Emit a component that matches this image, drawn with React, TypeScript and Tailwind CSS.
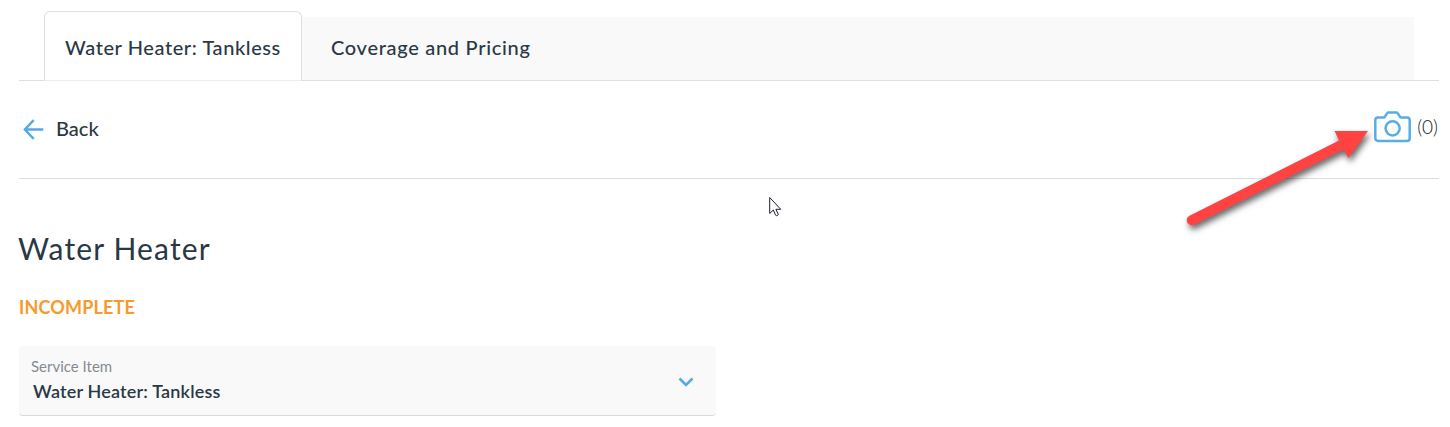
export default function App() {
  return (
    <main className="relative h-[427px] w-[1450px] overflow-hidden bg-white pt-[11px] pl-[19px] pr-[11px] font-['Lato',sans-serif] text-[#2a3846]">
      <nav className="flex h-[70px] items-end border-b border-[#dedfe0] pl-[25px] pr-[25px] text-[20px] font-medium">
        <button className="flex h-[70px] w-[258px] shrink-0 -mb-px items-center rounded-t-[6px] border border-b-[#eeeeee] border-[#dedfe0] bg-white pl-[20px] pt-[1px]">
          <span className="whitespace-nowrap tracking-[0.58px]">Water Heater: Tankless</span>
        </button>
        <button className="flex h-[63px] flex-1 items-center bg-[#f9f9f9] pb-[4px] pl-[29px]">
          <span className="whitespace-nowrap tracking-[0.7px]">Coverage and Pricing</span>
        </button>
      </nav>

      <header className="flex h-[98px] items-center justify-between border-b border-[#dcdddf]">
        <button className="flex items-center gap-[12px] pl-[4px]">
          <svg className="h-[21px] w-[21px]" viewBox="0 0 21 21" fill="none" stroke="#54a9e2" strokeWidth="2.4">
            <path d="M20.3 10.5H2M10.7 1.2 1.8 10.5l8.9 9.3" />
          </svg>
          <span className="pb-[3px] text-[20px] font-medium">Back</span>
        </button>
        <button className="flex items-center gap-[6px] pb-[5px] pr-px">
          <svg className="h-[32px] w-[38px]" viewBox="0 0 38 32" fill="none" stroke="#58ade4" strokeWidth="2.5" strokeLinejoin="round">
            <path d="M5 6.6h6.2l3-4.4c.3-.5.7-.7 1.3-.7h7.8c.6 0 1 .2 1.3.7l3 4.4H34a2.7 2.7 0 0 1 2.7 2.7v18a2.7 2.7 0 0 1-2.7 2.7H5a2.7 2.7 0 0 1-2.7-2.7v-18A2.7 2.7 0 0 1 5 6.600Z" />
            <circle cx="19.6" cy="17.3" r="7.1" />
          </svg>
          <span className="text-[19px] font-light text-[#101c28]">(0)</span>
        </button>
      </header>

      <section>
        <h1 className="mt-[49px] h-[40px] whitespace-nowrap text-[30px] leading-[40px] tracking-[1.15px] -ml-px">Water Heater</h1>
        <p className="mt-[27px] h-[24px] whitespace-nowrap text-[18px] font-bold leading-[24px] tracking-[0.15px] text-[#f79a2b]">INCOMPLETE</p>
        <button className="mt-[27px] flex h-[70px] w-[697px] items-center justify-between rounded-[4px] border-b border-[#d8d9da] bg-[#f9f9f9] pl-[12px] pr-[22px] text-left">
          <span className="flex flex-col pb-[3px]">
            <span className="h-[20px] text-[15px] leading-[20px] text-[#858b92]">Service Item</span>
            <span className="mt-[3px] h-[24px] whitespace-nowrap pl-[2px] text-[18px] font-semibold leading-[24px] tracking-[0.18px]">Water Heater: Tankless</span>
          </span>
          <svg className="mt-[2px] h-[10px] w-[16px]" viewBox="0 0 16 10" fill="none" stroke="#54a9e2" strokeWidth="2.5">
            <path d="m1.5 1.5 6.5 6.5 6.5-6.5" />
          </svg>
        </button>
      </section>

      <svg className="pointer-events-none absolute left-[1175px] top-[120px] h-[120px] w-[205px]" viewBox="1175 120 205 120">
        <path className="drop-shadow-[2px_4px_3px_rgba(0,0,0,0.6)]" fill="#ff4343" d="M1368 131 1348.5 158 1343.5 149.5 1194 224.7A5 5 0 0 1 1189.5 215.7L1339 140.5 1334.500 131Z" />
      </svg>
      <svg className="pointer-events-none absolute left-[769px] top-[196px] h-[21px] w-[14px]" viewBox="0 0 14 21">
        <path fill="white" stroke="#20202c" strokeWidth="1" d="M.7 1.500v16l3.600-3.500 2.300 5.200c.8 1.100 3.200.1 2.500-1.200l-2.200-4.700h4.800Z" />
      </svg>
    </main>
  );
}
